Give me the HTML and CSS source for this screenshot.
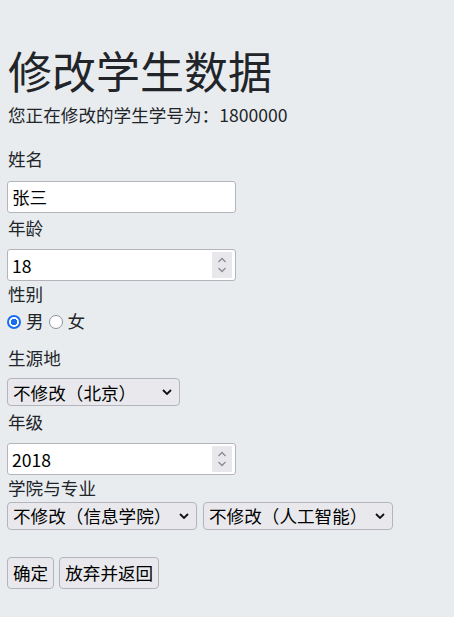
FILE: index.html
```html
<!DOCTYPE html>
<html lang="zh-CN">
<head>
<meta charset="utf-8">
<title>修改学生数据</title>
<link rel="stylesheet" href="styles.css">
</head>
<body>
<main class="page">
  <h1 class="title">修改学生数据</h1>
  <p class="sub">您正在修改的学生学号为：1800000</p>
  <form class="form">
    <label class="lbl">姓名</label>
    <input class="field txt-first" type="text" value="张三">
    <label class="lbl lbl-tight">年龄</label>
    <div class="num">
      <input class="field" type="number" value="18">
      <span class="spin"><svg width="20" height="26" viewBox="0 0 20 26"><path d="M6.5 10 L10 6.5 L13.5 10" fill="none" stroke="#8a8a92" stroke-width="1.3"/><path d="M6.5 16 L10 19.5 L13.5 16" fill="none" stroke="#8a8a92" stroke-width="1.3"/></svg></span>
    </div>
    <label class="lbl lbl-none">性别</label>
    <div class="radios">
      <label class="radio"><input type="radio" name="sex" checked><span>男</span></label>
      <label class="radio"><input type="radio" name="sex"><span>女</span></label>
    </div>
    <label class="lbl lbl-origin">生源地</label>
    <div class="sel sel-origin"><select><option>不修改（北京）</option></select></div>
    <label class="lbl lbl-grade">年级</label>
    <div class="num">
      <input class="field" type="number" value="2018">
      <span class="spin"><svg width="20" height="26" viewBox="0 0 20 26"><path d="M6.5 10 L10 6.5 L13.5 10" fill="none" stroke="#8a8a92" stroke-width="1.3"/><path d="M6.5 16 L10 19.5 L13.5 16" fill="none" stroke="#8a8a92" stroke-width="1.3"/></svg></span>
    </div>
    <label class="lbl lbl-none lbl-college">学院与专业</label>
    <div class="sel-row">
      <div class="sel sel-college"><select><option>不修改（信息学院）</option></select></div>
      <div class="sel sel-major"><select><option>不修改（人工智能）</option></select></div>
    </div>
    <div class="buttons">
      <button type="button" class="btn">确定</button>
      <button type="button" class="btn">放弃并返回</button>
    </div>
  </form>
</main>
</body>
</html>
```
FILE: styles.css
```css
* { box-sizing: border-box; }

html, body {
  margin: 0;
  padding: 0;
  background: #e9ecef;
}

body {
  font-family: "Noto Sans CJK SC", "Noto Sans", sans-serif;
  font-size: 17.6px;
  line-height: 26.4px;
  color: #212529;
}

.page {
  padding: 44px 7px 0 7px;
}

.title {
  margin: 0 0 0 1px;
  font-size: 44px;
  line-height: 52px;
  font-weight: 400;
}

.sub {
  margin: 6px 0 0 1px;
}

.form {
  display: flex;
  flex-direction: column;
  align-items: flex-start;
  margin-top: 18px;
}

.lbl {
  display: block;
  margin-left: 1px;
  margin-bottom: 8px;
}

.lbl-tight { margin-top: 2px; }
.lbl-none { margin-bottom: 1px; }
.lbl-origin { margin-top: 10px; margin-bottom: 7px; }
.lbl-grade { margin-top: 3px; }
.lbl-college { margin-top: 0; margin-bottom: 0; }

.field {
  width: 229px;
  height: 32px;
  margin: 0;
  padding: 0 4px;
  font-family: inherit;
  font-size: 17.6px;
  color: #000;
  background: #fff;
  border: 1px solid #b4b4bc;
  border-radius: 3px;
  outline: none;
}

.field::-webkit-inner-spin-button,
.field::-webkit-outer-spin-button {
  -webkit-appearance: none;
  margin: 0;
}

.field[type=number] { -moz-appearance: textfield; }

.num {
  position: relative;
  width: 229px;
  height: 32px;
}

.spin {
  position: absolute;
  top: 3px;
  right: 4px;
  width: 20px;
  height: 26px;
  background: #e8e8ec;
  display: flex;
}

.radios {
  display: flex;
  align-items: center;
  height: 26px;
  gap: 5px;
}

.radio {
  display: flex;
  align-items: center;
  gap: 5px;
}

.radio input {
  -webkit-appearance: none;
  appearance: none;
  width: 14px;
  height: 14px;
  margin: 0;
  border-radius: 50%;
  border: 1px solid #8f8f9d;
  background: #fff;
}

.radio input:checked {
  border: 2px solid #1a6cee;
  background: radial-gradient(circle, #1a6cee 0 3px, #fff 3.5px);
}

.sel-row {
  display: flex;
  gap: 6px;
}

.sel select {
  -webkit-appearance: none;
  appearance: none;
  height: 28px;
  margin: 0;
  padding: 0 0 0 5px;
  font-family: inherit;
  font-size: 17.6px;
  color: #000;
  background-color: #e9e9ed;
  background-image: url("data:image/svg+xml,%3Csvg xmlns='http://www.w3.org/2000/svg' width='10' height='6' viewBox='0 0 10 6'%3E%3Cpath d='M1 1 L5 5 L9 1' fill='none' stroke='%23111' stroke-width='1.8'/%3E%3C/svg%3E");
  background-repeat: no-repeat;
  background-position: right 7px center;
  border: 1px solid #b4b4bc;
  border-radius: 4px;
  outline: none;
}

.sel-origin select { width: 173px; }
.sel-college select { width: 190px; }
.sel-major select { width: 190px; }

.buttons {
  display: flex;
  gap: 5px;
  margin-top: 27px;
}

.btn {
  height: 32px;
  margin: 0;
  padding: 0 5px;
  font-family: inherit;
  font-size: 17.6px;
  color: #000;
  background: #e9e9ed;
  border: 1px solid #b4b4bc;
  border-radius: 4px;
}
```
